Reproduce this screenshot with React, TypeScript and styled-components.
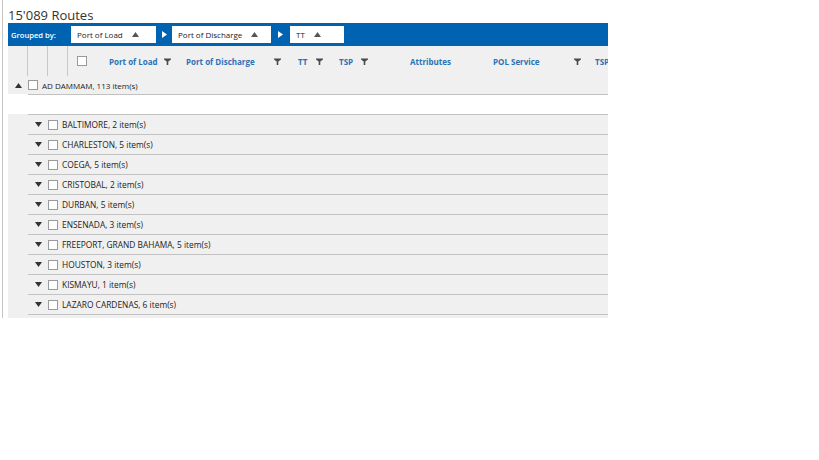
import React from 'react';
import styled, { createGlobalStyle } from 'styled-components';

const GlobalStyle = createGlobalStyle`
  body {
    margin: 0;
    background: #ffffff;
    font-family: "Open Sans", "Noto Sans", sans-serif;
  }
`;

interface Column {
  label: string;
  width: number;
  pad: number;
  filter: boolean;
  center?: boolean;
}

const columns: Column[] = [
  { label: 'Port of Load', width: 80, pad: 11, filter: true },
  { label: 'Port of Discharge', width: 110, pad: 8, filter: true },
  { label: 'TT', width: 42, pad: 10, filter: true },
  { label: 'TSP', width: 45, pad: 9, filter: true },
  { label: 'Attributes', width: 110, pad: 8, filter: false, center: true },
  { label: 'POL Service', width: 103, pad: 8, filter: true },
  { label: 'TSP', width: 60, pad: 7, filter: false },
];

const groups = [
  'BALTIMORE, 2 item(s)',
  'CHARLESTON, 5 item(s)',
  'COEGA, 5 item(s)',
  'CRISTOBAL, 2 item(s)',
  'DURBAN, 5 item(s)',
  'ENSENADA, 3 item(s)',
  'FREEPORT, GRAND BAHAMA, 5 item(s)',
  'HOUSTON, 3 item(s)',
  'KISMAYU, 1 item(s)',
  'LAZARO CARDENAS, 6 item(s)',
  '',
];

const FilterIcon = () => (
  <svg width="7" height="7" viewBox="0 0 7 7">
    <path d="M0 0.5 H7 V1.5 L4.3 3.6 V7 H2.7 V3.6 L0 1.5 Z" fill="#4a4a4a" />
  </svg>
);

const Arrow: React.FC<{ up?: boolean; color?: string }> = ({ up, color = '#333' }) => (
  <svg width="7" height="5" viewBox="0 0 7 5">
    {up ? <path d="M3.5 0 L7 5 H0 Z" fill={color} /> : <path d="M0 0 H7 L3.5 5 Z" fill={color} />}
  </svg>
);

const Chevron = () => (
  <svg width="5" height="7" viewBox="0 0 5 7">
    <path d="M0 0 L5 3.5 L0 7 Z" fill="#ffffff" />
  </svg>
);

const App: React.FC = () => (
  <>
    <GlobalStyle />
    <Frame>
      <Title>15'089 Routes</Title>
      <GroupBar>
        <GroupLabel>Grouped by:</GroupLabel>
        <Chip $width={85}>
          Port of Load <Arrow up color="#555" />
        </Chip>
        <Sep $width={16}><Chevron /></Sep>
        <Chip $width={99}>
          Port of Discharge <Arrow up color="#555" />
        </Chip>
        <Sep $width={19}><Chevron /></Sep>
        <Chip $width={54}>
          TT <Arrow up color="#555" />
        </Chip>
      </GroupBar>
      <HeaderRow>
        <IndentCell />
        <IndentCell />
        <IndentCell />
        <CheckCell>
          <Box />
        </CheckCell>
        {columns.map((c, i) => (
          <HeadCell key={i} $width={c.width} $pad={c.pad} $center={c.center}>
            <span>{c.label}</span>
            {c.filter && <FilterIcon />}
          </HeadCell>
        ))}
      </HeaderRow>
      <TopGroup>
        <Toggle>
          <Arrow up />
        </Toggle>
        <Box />
        <GroupText>AD DAMMAM, 113 item(s)</GroupText>
      </TopGroup>
      <Spacer />
      <Nested>
        <Gutter />
        <SubList>
          {groups.map((g, i) => (
            <SubRow key={i}>
              <Toggle>{g && <Arrow />}</Toggle>
              <Box />
              <SubText>{g}</SubText>
            </SubRow>
          ))}
        </SubList>
      </Nested>
    </Frame>
  </>
);

const Frame = styled.div`
  margin-left: 2px;
  width: 600px;
  height: 318px;
  overflow: hidden;
  border-left: 1px solid #c6c6c6;
  padding-left: 5px;
`;

const Title = styled.div`
  height: 23px;
  line-height: 30px;
  font-size: 13px;
  color: #333;
  white-space: nowrap;
`;

const GroupBar = styled.div`
  display: flex;
  align-items: center;
  height: 23px;
  background: #0063b1;
  padding-left: 3px;
`;

const GroupLabel = styled.div`
  width: 60px;
  color: #ffffff;
  font-size: 7.6px;
  font-weight: 600;
`;

const Chip = styled.div<{ $width: number }>`
  display: flex;
  align-items: center;
  gap: 9px;
  box-sizing: border-box;
  width: ${p => p.$width}px;
  height: 17px;
  padding-left: 6px;
  background: #ffffff;
  font-size: 8px;
  color: #222;
`;

const Sep = styled.div<{ $width: number }>`
  display: flex;
  justify-content: center;
  align-items: center;
  width: ${p => p.$width}px;
`;

const HeaderRow = styled.div`
  display: flex;
  height: 30px;
  background: #f0f0f0;
  white-space: nowrap;
`;

const IndentCell = styled.div`
  width: 20px;
  flex-shrink: 0;
  box-sizing: border-box;
  border-right: 1px solid #c8c8c8;
`;

const CheckCell = styled.div`
  width: 30px;
  flex-shrink: 0;
  display: flex;
  align-items: center;
  padding-left: 9px;
  box-sizing: border-box;
`;

const HeadCell = styled.div<{ $width: number; $pad: number; $center?: boolean }>`
  width: ${p => p.$width}px;
  flex-shrink: 0;
  box-sizing: border-box;
  display: flex;
  align-items: center;
  justify-content: ${p => (p.$center ? 'center' : 'space-between')};
  padding: 0 7px 0 ${p => p.$pad}px;
  font-size: 8px;
  font-weight: 700;
  color: #2b72b8;
`;

const Box = styled.div`
  width: 8px;
  height: 8px;
  flex-shrink: 0;
  background: #ffffff;
  border: 1px solid #9a9a9a;
`;

const Toggle = styled.div`
  width: 20px;
  flex-shrink: 0;
  display: flex;
  justify-content: center;
  align-items: center;
`;

const GroupText = styled.span`
  margin-left: 4px;
  font-size: 8px;
  color: #222;
  white-space: nowrap;
`;

const SubText = styled(GroupText)`
  font-size: 8.4px;
`;

const TopGroup = styled.div`
  display: flex;
  align-items: center;
  height: 18px;
  background: #f0f0f0;
  position: relative;

  &::after {
    content: '';
    position: absolute;
    left: 20px;
    right: 0;
    bottom: -1px;
    border-bottom: 1px solid #c2c2c2;
  }
`;

const Spacer = styled.div`
  height: 20px;
  background: #ffffff;
`;

const Nested = styled.div`
  display: flex;
`;

const Gutter = styled.div`
  width: 20px;
  flex-shrink: 0;
  background: #f0f0f0;
`;

const SubList = styled.div`
  flex: 1;
`;

const SubRow = styled.div`
  display: flex;
  align-items: center;
  height: 19px;
  background: #f0f0f0;
  border-top: 1px solid #c2c2c2;
`;

export default App;
